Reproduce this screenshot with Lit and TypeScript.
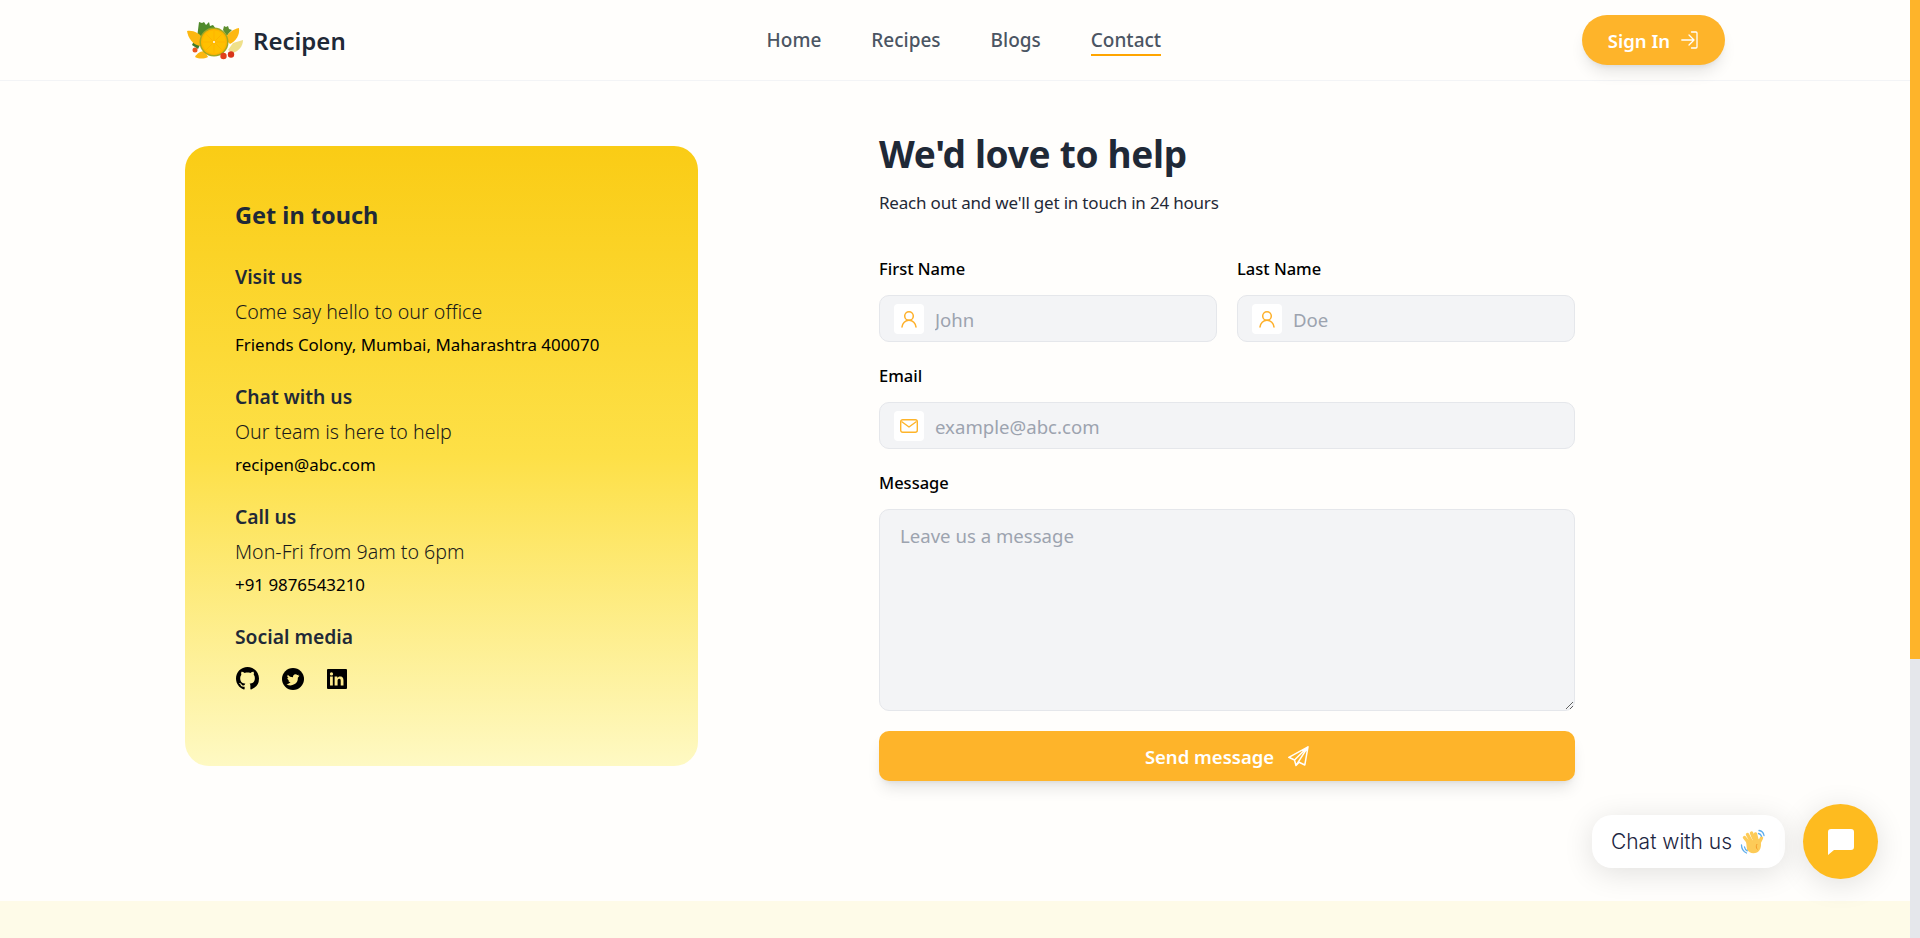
import { LitElement, html, css, svg } from 'lit';
import { customElement } from 'lit/decorators.js';

const userIcon = svg`<svg width="18" height="18" viewBox="0 0 18 18" fill="none" stroke="#feb02a" stroke-width="1.5" stroke-linecap="round"><circle cx="9" cy="6" r="4.300"/><path d="M2 17c.3-3.800 3.300-6.700 7-6.700s6.700 2.900 7 6.700"/></svg>`;

@customElement('app-root')
export class AppRoot extends LitElement {
  static styles = css`
    :host {
      display: flex;
      height: 100vh;
      overflow: hidden;
      font-family: "Noto Sans", "Open Sans", sans-serif;
      color: #1f2937;
      background: #fffefc;
    }
    * { box-sizing: border-box; }
    .page { flex: 1; min-width: 0; display: flex; flex-direction: column; }
    .scrollbar { width: 10px; background: #e5e7eb; }
    .thumb { height: 659px; background: #feb42a; }

    header {
      height: 81px;
      flex: none;
      border-bottom: 1px solid #f3f4f6;
      padding: 0 185px;
      display: flex;
      align-items: center;
      justify-content: space-between;
    }
    .brand { display: flex; align-items: center; gap: 5px; margin-left: -3px; font-size: 24px; font-weight: 600; }
    .brand svg { display: block; }
    nav { display: flex; gap: 50px; font-size: 19px; font-weight: 500; color: #4b5563; }
    nav a { display: block; line-height: 28px; }
    nav a.active { box-shadow: 0 2px 0 #ffa500; }
    .signin {
      width: 143px;
      height: 50px;
      border-radius: 25px;
      background: #feb42a;
      color: #fff;
      display: flex;
      align-items: center;
      justify-content: center;
      gap: 11px;
      font-size: 18.500px;
      font-weight: 600;
      box-shadow: 0 10px 15px -3px rgba(0,0,0,.1), 0 4px 6px -4px rgba(0,0,0,.1);
    }

    main {
      height: 820px;
      flex: none;
      padding: 50px 185px 0;
      display: grid;
      grid-template-columns: 513px 696px;
      column-gap: 181px;
      align-items: start;
    }
    .card {
      margin-top: 15px;
      height: 620px;
      border-radius: 24px;
      padding: 50px;
      background: linear-gradient(#facc15, #fde047 50%, #fef9c3);
    }
    .card h2 { margin: 0 0 29px; font-size: 23.500px; line-height: 38px; font-weight: 700; }
    .info { height: 120px; }
    .info h3 { margin: 0; font-size: 19.300px; line-height: 28px; font-weight: 600; }
    .info p { margin: 6px 0 0; font-size: 19.600px; line-height: 30px; font-weight: 300; color: #1a1a1a; }
    .info .strong { margin: 5px 0 0; font-size: 16.900px; line-height: 26px; font-weight: 400; color: #000; }
    .social { display: flex; align-items: center; gap: 23px; margin: 16px 0 0 1px; }
    .social svg { display: block; }

    h1 { margin: -1px 0 0; font-size: 37px; line-height: 48px; font-weight: 700; letter-spacing: -.3px; }
    .sub { margin: 13px 0 42px; font-size: 17px; line-height: 24px; letter-spacing: -.2px; color: #1f2937; }
    label { display: block; font-size: 16.500px; line-height: 24px; font-weight: 500; color: #000; margin-bottom: 14px; }
    .row { display: grid; grid-template-columns: 1fr 1fr; gap: 20px; }
    .field { margin-bottom: 22px; }
    .control {
      height: 47px;
      background: #f3f4f6;
      border: 1px solid #e5e7eb;
      border-radius: 10px;
      padding: 0 14px;
      display: flex;
      align-items: center;
      gap: 11px;
    }
    .icon {
      width: 30px;
      height: 30px;
      background: #fff;
      border-radius: 4px;
      display: flex;
      align-items: center;
      justify-content: center;
      flex: none;
    }
    input, textarea {
      border: none;
      background: transparent;
      font: inherit;
      font-size: 18.600px;
      outline: none;
      color: #1f2937;
      min-width: 0;
      width: 100%;
      padding: 2px 0 0;
    }
    input::placeholder, textarea::placeholder { color: #9ca3af; opacity: 1; }
    textarea {
      display: block;
      height: 202px;
      background: #f3f4f6;
      border: 1px solid #e5e7eb;
      border-radius: 10px;
      padding: 12px 20px;
      line-height: 28px;
    }
    .msg { margin-bottom: 20px; }
    .send {
      height: 50px;
      border-radius: 10px;
      background: #feb42a;
      color: #fff;
      display: flex;
      align-items: center;
      justify-content: center;
      gap: 14px;
      font-size: 18.500px;
      font-weight: 600;
      box-shadow: 0 10px 15px -3px rgba(0,0,0,.1), 0 4px 6px -4px rgba(0,0,0,.1);
    }
    footer { flex: 1; background: #fefbe8; }

    .chat-label {
      position: absolute;
      left: 1592px;
      top: 815px;
      width: 193px;
      height: 53px;
      background: #fff;
      border-radius: 20px;
      box-shadow: 0 5px 30px rgba(0,0,0,.12);
      display: flex;
      align-items: center;
      justify-content: center;
      gap: 8px;
      font-family: "Inter", "Lato", sans-serif;
      font-size: 21px;
      font-weight: 300;
      color: #1c2541;
    }
    .chat-btn {
      position: absolute;
      left: 1803px;
      top: 804px;
      width: 75px;
      height: 75px;
      border-radius: 50%;
      background: #febb1f;
      box-shadow: 0 5px 30px rgba(0,0,0,.12);
      display: flex;
      align-items: center;
      justify-content: center;
    }
  `;

  render() {
    return html`
      <div class="page">
        <header>
          <div class="brand">
            <svg width="66" height="48" viewBox="0 1 66 48">
              <path d="M17 7l3 1 2-1 2 3 3-3 1 4 3-1 3 4 3 1 4 4-12 12-14-8z" fill="#4f8a2b"/>
              <path d="M42 11l2 1 2-1 1 3 3 1-3 3-2 3-4-6z" fill="#5e8f2f"/>
              <path d="M13 24l-3 6 6 4 3-6z" fill="#3f7a2a"/>
              <path d="M5 16c6-1 13 2 16 8l-3 7C11 30 6 23 5 16z" fill="#fcb711"/>
              <path d="M57 13c1 7-3 13-9 16l-5-5c2-5 8-10 14-11z" fill="#fdb813"/>
              <path d="M61 25c0 6-4 11-10 13l-5-3 5-7z" fill="#efe08a"/>
              <path d="M13 42c2-4 6-6 10-6l3 6c-4 2-9 2-13 0z" fill="#fcb711"/>
              <circle cx="32" cy="27" r="14.500" fill="#a3a821"/>
              <circle cx="32" cy="27" r="13" fill="#ffb400"/>
              <circle cx="32" cy="27" r="11.500" fill="#ffc000"/>
              <path d="M32 16v22M21 27h22M24.200 19.200l15.600 15.600M39.800 19.200 24.200 34.800" stroke="#ffa800" stroke-width=".5"/>
              <circle cx="32" cy="27" r="1" fill="#fff"/>
              <circle cx="13" cy="35" r="2.500" fill="#e8551f"/>
              <circle cx="41.500" cy="41" r="3.200" fill="#e2401b"/>
              <circle cx="49" cy="39.500" r="3.200" fill="#d8341a"/>
            </svg>
            <span>Recipen</span>
          </div>
          <nav>
            <a>Home</a><a>Recipes</a><a>Blogs</a><a class="active">Contact</a>
          </nav>
          <div class="signin">
            <span>Sign In</span>
            <svg width="18" height="18" viewBox="0 0 18 18" fill="none" stroke="#fff" stroke-width="1.300" stroke-linecap="round" stroke-linejoin="round"><path d="M10.500 1h4.500a1 1 0 0 1 1 1v14a1 1 0 0 1-1 1h-4.500M.8 9H13M8 4l5 5-5 5"/></svg>
          </div>
        </header>
        <main>
          <section class="card">
            <h2>Get in touch</h2>
            <div class="info">
              <h3>Visit us</h3>
              <p>Come say hello to our office</p>
              <p class="strong">Friends Colony, Mumbai, Maharashtra 400070</p>
            </div>
            <div class="info">
              <h3>Chat with us</h3>
              <p>Our team is here to help</p>
              <p class="strong">recipen@abc.com</p>
            </div>
            <div class="info">
              <h3>Call us</h3>
              <p>Mon-Fri from 9am to 6pm</p>
              <p class="strong">+91 9876543210</p>
            </div>
            <div class="info">
              <h3>Social media</h3>
              <div class="social">
                <svg width="23" height="23" viewBox="0 0 16 16"><path d="M8 0C3.580 0 0 3.580 0 8c0 3.540 2.290 6.530 5.470 7.590.4.070.55-.17.55-.38 0-.19-.01-.82-.01-1.490-2.010.37-2.530-.49-2.690-.94-.09-.23-.48-.94-.82-1.130-.28-.15-.68-.52-.01-.53.63-.01 1.080.58 1.230.82.72 1.210 1.870.87 2.330.66.07-.52.28-.87.51-1.070-1.780-.2-3.640-.89-3.640-3.950 0-.87.31-1.590.82-2.150-.08-.2-.36-1.020.08-2.120 0 0 .67-.21 2.200.82.64-.18 1.320-.27 2-.27.68 0 1.360.09 2 .27 1.530-1.040 2.200-.82 2.200-.82.44 1.100.16 1.920.08 2.120.51.56.82 1.270.82 2.150 0 3.070-1.870 3.750-3.650 3.950.29.25.54.73.54 1.480 0 1.070-.01 1.930-.01 2.200 0 .21.15.46.55.38A8.012 8.012 0 0 0 16 8c0-4.420-3.580-8-8-8z"/></svg>
                <svg width="22" height="22" viewBox="0 0 24 24"><circle cx="12" cy="12" r="12"/><path fill="#fdeb8c" d="M19 8.100c-.5.2-1 .4-1.600.4.600-.3 1-.9 1.200-1.500-.5.3-1.100.6-1.800.7a2.800 2.800 0 0 0-4.800 2.500 8 8 0 0 1-5.800-2.900 2.800 2.800 0 0 0 .9 3.700c-.5 0-.9-.1-1.300-.3 0 1.400 1 2.500 2.300 2.800-.4.1-.8.100-1.300 0 .4 1.100 1.400 1.900 2.600 1.900A5.700 5.700 0 0 1 5 17.600 8 8 0 0 0 17.300 10.500c.6-.4 1.200-1.500 1.700-2.400z"/></svg>
                <svg width="20" height="20" viewBox="0 0 21 21"><rect width="21" height="21" rx="1"/><path fill="#fdeb8c" d="M3.200 8h2.900v9.300H3.200zM4.700 3.500a1.700 1.700 0 1 1 0 3.400 1.700 1.700 0 0 1 0-3.400zM8 8h2.800v1.300c.5-.8 1.500-1.500 2.900-1.500 3 0 3.600 1.900 3.600 4.400v5.100h-2.900v-4.500c0-1.100 0-2.500-1.500-2.500s-1.800 1.200-1.800 2.400v4.600H8z"/></svg>
              </div>
            </div>
          </section>
          <section>
            <h1>We'd love to help</h1>
            <p class="sub">Reach out and we'll get in touch in 24 hours</p>
            <div class="row field">
              <div>
                <label>First Name</label>
                <div class="control"><span class="icon">${userIcon}</span><input placeholder="John" /></div>
              </div>
              <div>
                <label>Last Name</label>
                <div class="control"><span class="icon">${userIcon}</span><input placeholder="Doe" /></div>
              </div>
            </div>
            <div class="field">
              <label>Email</label>
              <div class="control">
                <span class="icon"><svg width="18" height="14" viewBox="0 0 18 14" fill="none" stroke="#feb42a" stroke-width="1.400" stroke-linejoin="round"><rect x=".7" y=".7" width="16.600" height="12.600" rx="2"/><path d="M1.500 2.500 9 8l7.500-5.500"/></svg></span>
                <input placeholder="example@abc.com" />
              </div>
            </div>
            <div class="msg">
              <label>Message</label>
              <textarea placeholder="Leave us a message"></textarea>
            </div>
            <div class="send">
              <span>Send message</span>
              <svg width="21" height="21" viewBox="0 0 21 21" fill="none" stroke="#fff" stroke-width="1.500" stroke-linejoin="round"><path d="M20 .8.8 11.300 6.500 14 8 19.500l3.200-3.200 5.600 2.700zM20 .8 6.500 14M20 .8 8 19.500"/></svg>
            </div>
          </section>
        </main>
        <footer></footer>
      </div>
      <div class="scrollbar"><div class="thumb"></div></div>
      <div class="chat-label">
        <span>Chat with us</span>
        <svg width="26" height="26" viewBox="0 0 26 26" fill="none">
          <g stroke="#fdcb58" stroke-width="3.400" stroke-linecap="round">
            <path d="M8 13 4.500 8.500M10.500 11 7.500 5.500M14 10 11.500 4M17 11 15.500 5M19 14l2.500-5"/>
          </g>
          <path d="M6 12l14-2c2 6 1 11-3 13.500-4 1.800-8 .5-10-3z" fill="#fdcb58"/>
          <path d="M17 15c-1 2-1 4 .5 5.500" stroke="#f19020" stroke-width=".8"/>
          <path d="M19 1.500c2.500.3 4.500 2.300 5 5M18.500 4.500c1.500.2 2.500 1.200 3 2.800M1.500 16c0 3.500 1.800 6.500 5 8M4.500 18c.3 1.800 1.200 3 2.800 3.800" stroke="#5dadec" stroke-width="1.300" stroke-linecap="round"/>
        </svg>
      </div>
      <div class="chat-btn">
        <svg width="26" height="26" viewBox="0 0 26 26"><path d="M3 0h20a3 3 0 0 1 3 3v15a3 3 0 0 1-3 3H6l-6 5V3a3 3 0 0 1 3-3z" fill="#fff"/></svg>
      </div>
    `;
  }
}
